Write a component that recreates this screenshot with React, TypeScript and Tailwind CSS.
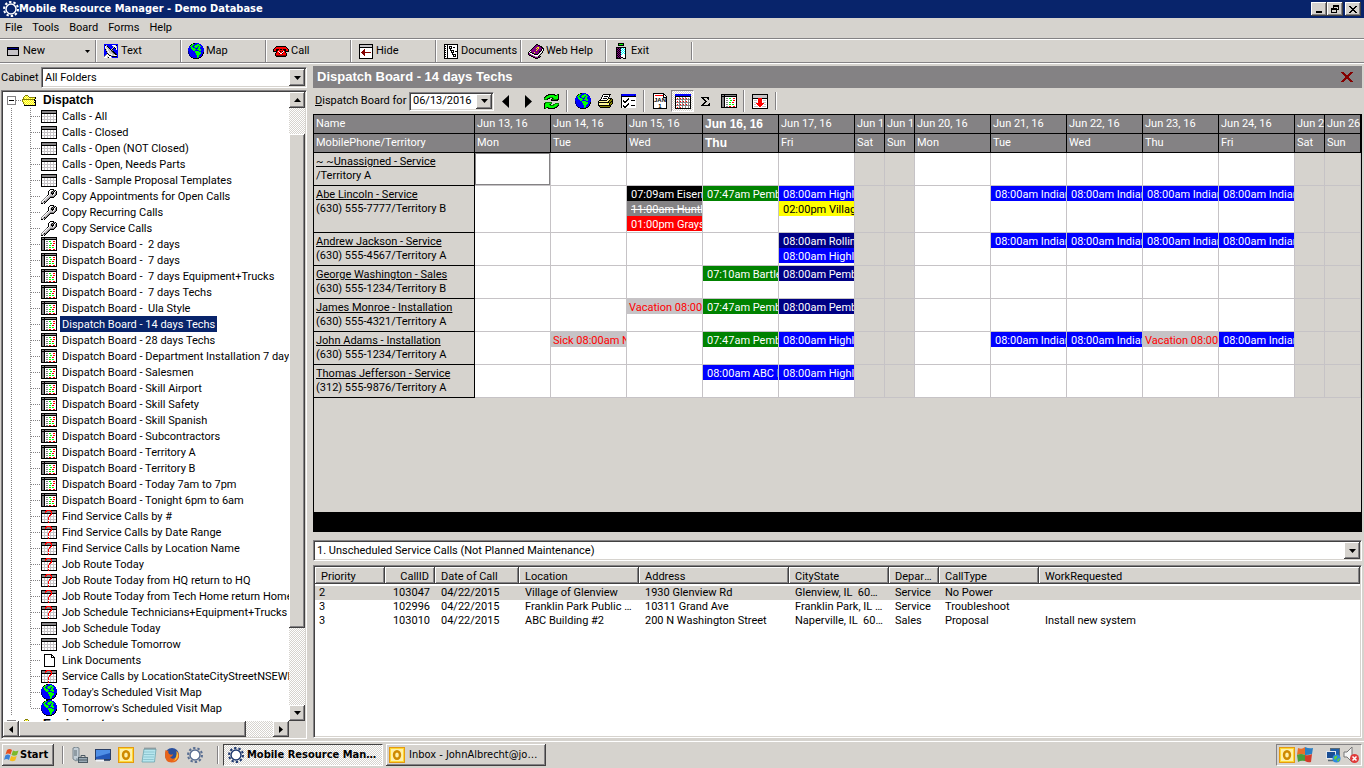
import React from 'react';
import clsx from 'clsx';

const RAISED = 'bg-[#d6d3ce] shadow-[inset_-1px_-1px_#424142,inset_1px_1px_#ffffff,inset_-2px_-2px_#848284]';
const SUNKEN =
  'border border-[#848284] border-r-white border-b-white p-px shadow-[inset_1px_1px_#424142,inset_-1px_-1px_#d6d3ce]';
const CHECKER = 'bg-[repeating-conic-gradient(#ffffff_0_25%,#d6d3ce_0_50%)] bg-[length:2px_2px]';
const DOTS_V = 'w-px bg-[repeating-linear-gradient(to_bottom,#848284_0_1px,transparent_1px_2px)]';
const DOTS_H = 'h-px bg-[repeating-linear-gradient(to_right,#848284_0_1px,transparent_1px_2px)]';
const UI_FONT = "font-['DejaVu_Sans_Condensed','DejaVu_Sans',sans-serif]";
const BOLD_FONT = "font-['Liberation_Sans',Arial,sans-serif] font-bold";

/* ---------- icons ---------- */

const PALETTE: Record<string, string> = {
  k: '#000000',
  w: '#ffffff',
  g: '#848284',
  l: '#c6c3c6',
  b: '#0000ff',
  n: '#000084',
  G: '#00ff00',
  d: '#008200',
  r: '#ff0000',
  m: '#840000',
  y: '#ffff00',
  Y: '#fff79c',
  p: '#840084',
  c: '#00ffff',
  o: '#848200',
};

// One character per pixel, anything outside the palette stays transparent
function Pixels({ rows }: { rows: string[] }) {
  const w = Math.max(...rows.map((row) => row.length));
  return (
    <svg width={w} height={rows.length} viewBox={`0 0 ${w} ${rows.length}`} shapeRendering="crispEdges" className="shrink-0" aria-hidden="true">
      {rows.map((row, y) =>
        row.split('').map((ch, x) =>
          PALETTE[ch] ? <rect key={`${x}-${y}`} x={x} y={y} width="1" height="1" fill={PALETTE[ch]} /> : null
        )
      )}
    </svg>
  );
}

const GLOBE = [
  '.....kkbbbb.....',
  '...kGGbbbGGbb...',
  '..kGGbbGGGGGbb..',
  '.bGGbbGGGGbGGbb.',
  '.bbGGbbGGbGGbbb.',
  'bbbGGGGbbbGGbbbb',
  'bbbbGGGGbGGGGbbb',
  'bbbbbGGbbbbGGbbb',
  'nbbbbbbGGGGbbbbb',
  'nbbbbbbGGGGGGbbk',
  'nbbbbbbbGGGGGbbk',
  '.nbbbbbbGGGGbbk.',
  '.nbbbbbbbGGbbbk.',
  '..nbbbbbbGGbbk..',
  '...knbbbbGbkk...',
  '.....kkkkkk.....',
];

const FOLDER = [
  '...ooo.........',
  '..oYyYo........',
  '.oYyYyYooooook.',
  '.oyYyYyYyYyYyk.',
  'ooooooooooook..',
  'oYyYyYyYyYyYkk.',
  'oyYyYyYyYyYyYk.',
  '.oyYyYyYyYyYkk.',
  '.oYyYyYyYyYyYk.',
  '..oYyYyYyYyYyk.',
  '..kkkkkkkkkkkk.',
];

const WRENCH = [
  '.........kkkk...',
  '........kwwwkgk.',
  '.......kwwgkgkwk',
  '.......kwlkgkwgk',
  '.......kwlkkkwgk',
  '.......kwllkwlgk',
  '......kwlllllgk.',
  '.....gwllggggk..',
  '....gwllgkkkk...',
  '...gwllgk.......',
  '..gwllgk........',
  '.gwllgk.........',
  'gwlkgk..........',
  'glggk...........',
  'kk.k............',
];

const PAGE = [
  'kkkkkkkk...',
  'kwwwwwwkk..',
  'kwwwwwwkwk.',
  'kwwwwwwkkkk',
  'kwwwwwwwwwk',
  'kwwwwwwwwwk',
  'kwwwwwwwwwk',
  'kwwwwwwwwwk',
  'kwwwwwwwwwk',
  'kwwwwwwwwwk',
  'kwwwwwwwwwk',
  'kwwwwwwwwwk',
  'kkkkkkkkkkk',
];

const NEW_FORM = [
  'kkkkkkkkkkkk',
  'knnnnnnnnnnk',
  'kkkkkkkkkkkk',
  'kllllllllllk',
  'kllllllllllk',
  'kllllllllllk',
  'kllllllllllk',
  'kllllllllllk',
  'kkkkkkkkkkkk',
];

const DISH = [
  'bbbbbbbbbbbbbb',
  'bklbbbbbwwwlkb',
  'bwlkbbbbblwwlb',
  'bwllkbbbblkwlb',
  'blwllkbblkbkwb',
  'bklwllklkbbbwb',
  'bblwlllkgbbbbb',
  'bbklwllgkkbbbb',
  'bbblwlllgkkbbb',
  'bbbklwlllgkkbb',
  'bbgwklwwlllkkb',
  'bgwwwkklllwwlb',
  'gwwlwwwbkkkkkb',
  'wwwlkwwlbbbbbb',
];

const PHONE = [
  '...kkkkkkkkkk...',
  '..krrrrrrrrrrk..',
  '.krrrrrrrrrrrrk.',
  'krrkkkrkkrkkkrrk',
  'krrkkrrrrrrkkrrk',
  'kkkkrwrkrkwrkkkk',
  '...krrwrrwrrk...',
  '..krrrkwwkrrrk..',
  '..krrrrrrrrrrk..',
  '..kmmmmmmmmmmk..',
  '...kkkkkkkkkk...',
];

const HIDE = [
  'kkkkkkkkkkkkkk',
  'kllllllllllllk',
  'kllllllllllllk',
  'kkkkkkkkkkkkkk',
  'kwwwwwwwwwwwwk',
  'kwwwwmwwwwwwwk',
  'kwwwmmwwwwwwwk',
  'kwwmmmwwwwwwwk',
  'kwmmmmmmmmmmwk',
  'kwwmmmwwwwwwwk',
  'kwwwmmwwwwwwwk',
  'kwwwwmwwwwwwwk',
  'kwwwwwwwwwwwwk',
  'kwwwwwwwwwwwwk',
  'kkkkkkkkkkkkkk',
];

const DOCS = [
  'kkkkkkkkkkkkkk',
  'kwwkwwwwwwwwwk',
  'kkwkwkkkwwwwwk',
  'kwwkwkwkwkkwwk',
  'kkwkwkkkwwwwwk',
  'kwwkwwkwwwwwwk',
  'kkwkwwkkkkwwwk',
  'kwwkwwwkwkwkkk',
  'kkwkwwwkkkwwwk',
  'kwwkwwwwkwwwwk',
  'kkwkwwwwkkkkwk',
  'kwwkwwwwwkwkwk',
  'kkwkwwwwwkkkwk',
  'kwwkwwwwwwwwwk',
  'kkkkkkkkkkkkkk',
];

const BOOK = [
  '........kk......',
  '.......kppkk....',
  '......kpppppkk..',
  '.....kpppyyppkk.',
  '....kpppypypppkk',
  '...kpppppypppkwk',
  '..kpppppyppppkwk',
  '.kwppppppppkkwk.',
  'kwkkppyppppkwlk.',
  'kpwwkkppppkwlk..',
  'kpplwwkkkkwlk...',
  '.kkpplwwwwlk....',
  '...kkpplllkpk...',
  '.....kkpppkk....',
  '.......kkk......',
];

const EXIT = [
  '..kkkkkk..',
  '..kGGGGk..',
  '..kkkkkk..',
  '..........',
  'kkkkkkkkkk',
  'kpkpkcwcwk',
  'kkpkpwcwck',
  'kpkpkcwcwk',
  'kkpkpwcwck',
  'kpkpkcwcwk',
  'kkpkpwcwck',
  'kpkpkcwwwk',
  'kkpkpwwwwk',
  'kpkpkwwwwk',
  'kkpkpkkwwk',
  'kkkkk..kkk',
];

const REFRESH = [
  '....kkkkkkk..dk.',
  '..kkdGGGGGdkdGk.',
  '.kdGGGGGGGGGGGk.',
  'kdGGGddddGGGGGk.',
  'dGGdkk..kdGGGGk.',
  'dddk...kdddddkk.',
  '.......kkkkkkk..',
  '................',
  '.ddddddd........',
  'kdGGGGGd...dddd.',
  'kGGGGdk..ddGGGd.',
  'kGGGGGddddGGGdk.',
  'kGGGGGGGGGGGdk..',
  'kGdkdGGGGGdkk...',
  'kd..kkkkkkk.....',
];

const PRINTER = [
  '.....kkkkkkkk...',
  '....kwwwwwwk....',
  '....kwkkkkwk....',
  '...kwwwwwwk.....',
  '...kwkkkkwkkkk..',
  '..kwwwwwwkYYkok.',
  '.kkkkkkkkYYkook.',
  'kYYYYYYYYYkookk.',
  'kkkkkkkkkkkokok.',
  'kYYYYYYYYyYkook.',
  'kYYYYYYYYYYkok..',
  'kkkkkkkkkkkkk...',
  '.kooooooooook...',
  '..kkkkkkkkkk....',
];

const CHECKS = [
  'nbbbbbbbbbbbbbb',
  'nbbbbbbbbbbbbnb',
  'kkkkkkkkkkkkkkk',
  'kwwwwwwwwwwwwww',
  'kwwwwwwkwwwwwww',
  'kwwwwwkkwwwwwww',
  'kwkwwkkwwwkkkkw',
  'kwkkkkwwwwwwwww',
  'kwwkkwwwwwwwwww',
  'kwwwwwwkwwwwwww',
  'kwwwwwkkwwwwwww',
  'kwkwwkkwwwkkkkw',
  'kwkkkkwwwwwwwww',
  'kwwkkwwwwwwwwww',
];

const CALENDAR = [
  'bbbbbbbbbbbbbbbb',
  'bbbbbbbbbbbbbbbb',
  'kkkkkkkkkkkkkkkk',
  'kwwwgwwgwwgwwwwk',
  'kwrwgrwgrwgrwgwk',
  'kggggggggggggggk',
  'kwwwgwwgwwgwwgwk',
  'kwrwgrwgrwgrwgwk',
  'kggggggggggggggk',
  'kwwwgwwgwwgwwgwk',
  'kwrwgrwgrwgrwgwk',
  'kggggggggggggggk',
  'kwwwgwwgwwgwwgwk',
  'kwrwgrwgwwgwwgwk',
  'kkkkkkkkkkkkkkkk',
];

const BOARD = [
  'kkkkkkkkkkkkkkkk',
  'kggkgggggggggggk',
  'kkkkkkkkkkkkkkkk',
  'kggkwwwwwwwwwwwk',
  'kggkwggwGGwwrrwk',
  'kggkwwwwwwwwwwwk',
  'kggkwggwwGGwrrwk',
  'kggkwwwwwwwwwwwk',
  'kggkwggwGGwrrwwk',
  'kggkwwwwwwwwwwwk',
  'kggkwggwGGwGGwwk',
  'kggkwwwwwwwwwwwk',
  'kggkwggwrrwwrrwk',
  'kkkkkkkkkkkkkkkk',
];

const SPLIT_DOWN = [
  'kkkkkkkkkkkkkkkk',
  'kllllllllllllllk',
  'kllllllllllllllk',
  'kllllllllllllllk',
  'kkkkkkrrrrkkkkkk',
  'kwwwwwrrrrwwwwwk',
  'kwlllwrrrrwlllwk',
  'kwwwwwrrrrwwwwwk',
  'kwlllwrrrrwlllwk',
  'kwwwrrrrrrrrwwwk',
  'kwllwrrrrrrwllwk',
  'kwwwwwrrrrwwwwwk',
  'kwllllwrrwllllwk',
  'kwwwwwwwwwwwwwwk',
  'kkkkkkkkkkkkkkkk',
];

const CLOSE_X = [
  'mmm......mmm',
  '.mmm....mmm.',
  '..mmm..mmm..',
  '...mmmmmm...',
  '....mmmm....',
  '....mmmm....',
  '...mmmmmm...',
  '..mmm..mmm..',
  '.mmm....mmm.',
  'mmm......mmm',
];

const MINIMIZE = ['.......', '.......', '.......', '.......', '.......', 'kkkkkk.', 'kkkkkk.'];
const RESTORE = ['..kkkkkk', '..kkkkkk', '..k....k', 'kkkkkk.k', 'kkkkkkkk', 'k....k..', 'k....k..', 'kkkkkk..'];
const SHUT = ['kk....kk', '.kk..kk.', '..kkkk..', '...kk...', '..kkkk..', '.kk..kk.', 'kk....kk'];

const SIGMA = [
  'kkkkkkkk.',
  '.kk...kk.',
  '..kk...k.',
  '...kk....',
  '....kk...',
  '...kk....',
  '..kk....k',
  '.kk....kk',
  'kkkkkkkkk',
];

const GRID = [
  'kkkkkkkkkkkkkkkk',
  'kggggggggggggggk',
  'kggggggggggggggk',
  'kkkkkkkkkkkkkkkk',
  'kwwlwwlwwlwwlwwk',
  'kwwlwwlwwlwwlwwk',
  'kllllllllllllllk',
  'kwwlwwlwwlwwlwwk',
  'kwwlwwlwwlwwlwwk',
  'kllllllllllllllk',
  'kwwlwwlwwlwwlwwk',
  'kwwlwwlwwlwwlwwk',
  'kkkkkkkkkkkkkkkk',
];

const SEARCH_GRID = [
  'kkkkkrrrrrkkkkkk',
  'kgggrrgggrrggggk',
  'kgggrgggggrggggk',
  'kkkkkkkkkkrkkkkk',
  'kwwlwwlwwrrwlwwk',
  'kwwlwwlwrrwwlwwk',
  'klllllllrllllllk',
  'kwwlwwlrwlwwlwwk',
  'kwwlwwlrwlwwlwwk',
  'kllllllrlllllllk',
  'kwwlwwlwwlwwlwwk',
  'kwwlwwlrwlwwlwwk',
  'kkkkkkkrkkkkkkkk',
];

function JanIcon() {
  return (
    <svg width="14" height="16" viewBox="0 0 14 16" shapeRendering="crispEdges" className="shrink-0" aria-hidden="true">
      <path d="M0.5 0.5h10l3 3v12h-13z" fill="#fff" stroke="#000" />
      <path d="M2 2.5h8" stroke="#ff0000" />
      <path d="M10 0v4h4" fill="none" stroke="#000" />
      <text x="7" y="9" fontSize="6" fontWeight="bold" textAnchor="middle" fontFamily="Liberation Sans">JAN</text>
      <text x="7" y="15" fontSize="6" fontWeight="bold" textAnchor="middle" fontFamily="Liberation Sans">1</text>
    </svg>
  );
}

function GearIcon({ color, fill = 'none' }: { color: string; fill?: string }) {
  return (
    <svg width="16" height="16" viewBox="0 0 16 16" className="shrink-0" aria-hidden="true">
      <circle cx="8" cy="8" r="7" fill="none" stroke={color} strokeWidth="2" strokeDasharray="2.4 2" />
      <circle cx="8" cy="8" r="5" fill={fill} stroke={color} strokeWidth="1.5" />
    </svg>
  );
}

function WindowsFlag() {
  return (
    <svg width="16" height="16" viewBox="0 0 16 16" className="shrink-0" aria-hidden="true">
      <path d="M3 3q2.5-2 5 0l-1.5 4.5q-2.5-2-5 0z" fill="#e8501f" />
      <path d="M9 3.5q2.5 1.5 5.5 0L13 8q-3 1.5-5.5 0z" fill="#7cb92c" />
      <path d="M1.3 8.5q2.5-2 5 0L5 13q-2.5-2-5 0z" fill="#3b82d8" />
      <path d="M7.2 9q2.5 1.5 5.5 0L11.2 13.5q-3 1.5-5.5 0z" fill="#f6bd1d" />
    </svg>
  );
}

function OutlookIcon() {
  return (
    <svg width="16" height="16" viewBox="0 0 16 16" className="shrink-0" aria-hidden="true">
      <rect x="0.5" y="0.5" width="15" height="15" fill="#fdd835" stroke="#e59a10" />
      <rect x="2" y="2" width="12" height="12" fill="#fff0a8" />
      <ellipse cx="8" cy="8" rx="3" ry="3.8" fill="none" stroke="#cf8a00" strokeWidth="2.4" />
    </svg>
  );
}

function ServerIcon() {
  return (
    <svg width="16" height="16" viewBox="0 0 16 16" className="shrink-0" aria-hidden="true">
      <path d="M1 1l3-1 3 1v11l-3 2-3-2z" fill="#c3ced6" stroke="#66757f" strokeWidth="0.8" />
      <path d="M2 4h3M2 6h3M2 8h3" stroke="#5c6a73" />
      <path d="M4 12l4 2" stroke="#8fa0ac" strokeWidth="2" />
      <rect x="6.5" y="10.5" width="9" height="5" fill="#9aaab5" stroke="#4c5a64" />
      <path d="M9 10V8.5h4V10M7 13h8" fill="none" stroke="#4c5a64" />
    </svg>
  );
}

function DesktopIcon() {
  return (
    <svg width="16" height="16" viewBox="0 0 16 16" className="shrink-0" aria-hidden="true">
      <rect x="0.5" y="2.5" width="15" height="10" fill="#2358b8" stroke="#2a3f66" />
      <path d="M1 3h14v3L1 10z" fill="#4f8fe6" />
      <path d="M1 13.5h8" stroke="#f0f4fa" strokeWidth="2" />
      <path d="M9 13.5h6" stroke="#4a5a78" strokeWidth="1" />
    </svg>
  );
}

function NotepadIcon() {
  return (
    <svg width="16" height="16" viewBox="0 0 16 16" className="shrink-0" aria-hidden="true">
      <path d="M3 2h12l-1.5 13H1z" fill="#b7e6ee" stroke="#6aa5b0" strokeWidth="0.8" />
      <path d="M3 5h10.5M2.8 7.5h10.5M2.5 10h10.5M2.2 12.5h10.5" stroke="#7cb7c4" strokeWidth="0.7" />
      <path d="M3.5 1.5h11" stroke="#6b7a80" strokeDasharray="1 1" strokeWidth="2" />
    </svg>
  );
}

function FirefoxIcon() {
  return (
    <svg width="16" height="16" viewBox="0 0 16 16" className="shrink-0" aria-hidden="true">
      <circle cx="8" cy="8" r="7" fill="#2a4f9c" />
      <path d="M1.5 3q1.5 1 3 .5Q3.5 6 6 7.5q2 .5 3-.5-.5 3-3 3 2 3 5 1 3-2.5 1.5-7Q15.5 6 15 10q-1.5 5.5-7.5 5.5Q1 15 1 8.5 1 5 1.5 3z" fill="#e8641b" />
      <path d="M12.5 4q2.5 3 1 7-1.5 3-5 3.5 5-3 4-10.5z" fill="#ffc233" />
    </svg>
  );
}

function QuadIcon() {
  return (
    <svg width="16" height="16" viewBox="0 0 16 16" className="shrink-0" aria-hidden="true">
      <path d="M1 1q4 2 7-1v8q-4-2-8 0z" fill="#e8702a" />
      <path d="M8 0q4 2 8 1l-1 6q-3 1-7 1z" fill="#2b7fc4" />
      <path d="M0 8q4-2 8 0v6q-4-1-7 1z" fill="#4a9c3a" />
      <path d="M8 8q4 1 7-1l-1 8q-3 1-6-1z" fill="#d43a2a" />
    </svg>
  );
}

function NetworkIcon() {
  return (
    <svg width="16" height="16" viewBox="0 0 16 16" className="shrink-0" aria-hidden="true">
      <rect x="5.5" y="1.5" width="9" height="7" fill="#1f5fa8" stroke="#5c6a73" />
      <rect x="1.5" y="4.5" width="9" height="7" fill="#1b4f94" stroke="#e4e9ee" />
      <path d="M3 13.5h6" stroke="#5c6a73" strokeWidth="1.5" />
      <circle cx="11.5" cy="11.5" r="4" fill="#2d8be0" />
      <path d="M9 10q2-2 3-1t-1 3-2-2zM12 13l2-2 1 1-2 3z" fill="#5fd03a" />
    </svg>
  );
}

function MutedIcon() {
  return (
    <svg width="16" height="16" viewBox="0 0 16 16" className="shrink-0" aria-hidden="true">
      <path d="M1 5h3l5-5v15l-5-5H1z" fill="#f4f4f4" stroke="#777" />
      <circle cx="11.5" cy="11.5" r="4.5" fill="#e03a3a" />
      <path d="M9.5 9.5l4 4M13.5 9.5l-4 4" stroke="#fff" strokeWidth="1.5" />
    </svg>
  );
}

function Arrow({ dir, size = 4 }: { dir: 'up' | 'down' | 'left' | 'right'; size?: number }) {
  const long = size * 2 - 1;
  const horizontal = dir === 'left' || dir === 'right';
  const w = horizontal ? size : long;
  const h = horizontal ? long : size;
  const points = {
    up: `0,${h} ${w},${h} ${w / 2},0`,
    down: `0,0 ${w},0 ${w / 2},${h}`,
    left: `${w},0 ${w},${h} 0,${h / 2}`,
    right: `0,0 0,${h} ${w},${h / 2}`,
  }[dir];
  return (
    <svg width={w} height={h} viewBox={`0 0 ${w} ${h}`} className="shrink-0" aria-hidden="true">
      <polygon points={points} fill="#000" />
    </svg>
  );
}

/* ---------- small controls ---------- */

function Combo({ label, value, className }: { label: string; value: string; className?: string }) {
  return (
    <div className={clsx('flex bg-white', SUNKEN, className)}>
      <select aria-label={label} className="min-w-0 flex-1 appearance-none bg-white pl-[2px] outline-none">
        <option>{value}</option>
      </select>
      <span className={clsx('flex w-4 shrink-0 items-center justify-center', RAISED)}>
        <Arrow dir="down" />
      </span>
    </div>
  );
}

function ScrollButton({ dir }: { dir: 'up' | 'down' | 'left' | 'right' }) {
  return (
    <button type="button" aria-label={`Scroll ${dir}`} className={clsx('flex size-4 shrink-0 items-center justify-center', RAISED)}>
      <Arrow dir={dir} />
    </button>
  );
}

function Divider({ className }: { className?: string }) {
  return <span className={clsx('w-[2px] border-l border-r border-l-[#848284] border-r-white', className)} />;
}

/* ---------- title, menu and toolbar ---------- */

function TitleBar() {
  const controls = [
    { label: 'Minimize', rows: MINIMIZE, gap: '' },
    { label: 'Restore', rows: RESTORE, gap: '' },
    { label: 'Close', rows: SHUT, gap: 'ml-[2px]' },
  ];
  return (
    <header className={clsx('flex h-[18px] shrink-0 items-center bg-[#08246b] pl-[3px] pr-[3px] text-white', UI_FONT)}>
      <GearIcon color="#ffffff" />
      <h1 className="flex-1 text-[11px] font-bold">Mobile Resource Manager - Demo Database</h1>
      {controls.map((c) => (
        <button key={c.label} type="button" aria-label={c.label} className={clsx('flex h-[14px] w-4 items-center justify-center', RAISED, c.gap)}>
          <Pixels rows={c.rows} />
        </button>
      ))}
    </header>
  );
}

function MenuBar() {
  return (
    <nav className="flex h-[21px] shrink-0 items-center border-b border-[#848284]">
      {['File', 'Tools', 'Board', 'Forms', 'Help'].map((item) => (
        <button key={item} type="button" className="px-[5px]">
          {item}
        </button>
      ))}
    </nav>
  );
}

const TOOLS = [
  { label: 'Text', rows: DISH },
  { label: 'Map', rows: GLOBE },
  { label: 'Call', rows: PHONE },
  { label: 'Hide', rows: HIDE },
  { label: 'Documents', rows: DOCS },
  { label: 'Web Help', rows: BOOK },
  { label: 'Exit', rows: EXIT },
];

function ToolBar() {
  return (
    <div className="flex h-6 shrink-0 items-center border-t border-b border-t-white border-b-[#848284] leading-4">
      <button type="button" className="flex h-full w-24 items-center border-r border-[#848284] pl-[7px] pr-[5px]">
        <Pixels rows={NEW_FORM} />
        <span className="flex-1 pl-1 text-left">New</span>
        <Arrow dir="down" size={3} />
      </button>
      {TOOLS.map(({ label, rows }, i) => (
        <button
          key={label}
          type="button"
          className={clsx(
            'flex h-full w-[85px] items-center gap-[2px] border-l border-l-white pl-[6px]',
            i < TOOLS.length - 1 && 'border-r border-r-[#848284]'
          )}
        >
          <span className="flex w-4 shrink-0 justify-center">
            <Pixels rows={rows} />
          </span>
          {label}
        </button>
      ))}
      <Divider className="h-[18px]" />
    </div>
  );
}

/* ---------- folder tree ---------- */

type TreeIcon = 'grid' | 'wrench' | 'board' | 'search' | 'page' | 'globe';

const TREE: [TreeIcon, string][] = [
  ['grid', 'Calls - All'],
  ['grid', 'Calls - Closed'],
  ['grid', 'Calls - Open (NOT Closed)'],
  ['grid', 'Calls - Open, Needs Parts'],
  ['grid', 'Calls - Sample Proposal Templates'],
  ['wrench', 'Copy Appointments for Open Calls'],
  ['wrench', 'Copy Recurring Calls'],
  ['wrench', 'Copy Service Calls'],
  ['board', 'Dispatch Board -  2 days'],
  ['board', 'Dispatch Board -  7 days'],
  ['board', 'Dispatch Board -  7 days Equipment+Trucks'],
  ['board', 'Dispatch Board -  7 days Techs'],
  ['board', 'Dispatch Board -  Ula Style'],
  ['board', 'Dispatch Board - 14 days Techs'],
  ['board', 'Dispatch Board - 28 days Techs'],
  ['board', 'Dispatch Board - Department Installation 7 days'],
  ['board', 'Dispatch Board - Salesmen'],
  ['board', 'Dispatch Board - Skill Airport'],
  ['board', 'Dispatch Board - Skill Safety'],
  ['board', 'Dispatch Board - Skill Spanish'],
  ['board', 'Dispatch Board - Subcontractors'],
  ['board', 'Dispatch Board - Territory A'],
  ['board', 'Dispatch Board - Territory B'],
  ['board', 'Dispatch Board - Today 7am to 7pm'],
  ['board', 'Dispatch Board - Tonight 6pm to 6am'],
  ['search', 'Find Service Calls by #'],
  ['search', 'Find Service Calls by Date Range'],
  ['search', 'Find Service Calls by Location Name'],
  ['search', 'Job Route Today'],
  ['search', 'Job Route Today from HQ return to HQ'],
  ['search', 'Job Route Today from Tech Home return Home'],
  ['search', 'Job Schedule Technicians+Equipment+Trucks'],
  ['grid', 'Job Schedule Today'],
  ['grid', 'Job Schedule Tomorrow'],
  ['page', 'Link Documents'],
  ['search', 'Service Calls by LocationStateCityStreetNSEWName'],
  ['globe', "Today's Scheduled Visit Map"],
  ['globe', "Tomorrow's Scheduled Visit Map"],
];

const TREE_ICONS: Record<TreeIcon, string[]> = {
  grid: GRID,
  search: SEARCH_GRID,
  board: BOARD,
  wrench: WRENCH,
  page: PAGE,
  globe: GLOBE,
};

function FolderRow({ label, open }: { label: string; open: boolean }) {
  return (
    <div className="flex h-4 items-center pl-1">
      <span className="flex size-[9px] shrink-0 items-center justify-center border border-[#848284] bg-white">
        {open ? <span className="h-px w-[5px] bg-black" /> : <span className="text-[9px] leading-none">+</span>}
      </span>
      <span className={clsx('w-[6px] shrink-0', DOTS_H)} />
      <Pixels rows={FOLDER} />
      <button type="button" className={clsx('pl-[6px] text-[12px]', BOLD_FONT)}>
        {label}
      </button>
    </div>
  );
}

function FolderTree() {
  const [selected, setSelected] = React.useState('Dispatch Board - 14 days Techs');

  return (
    <div className={clsx('flex min-h-0 flex-1 flex-col bg-white', SUNKEN)}>
      <div className="flex min-h-0 flex-1">
        <div className="min-w-0 flex-1 overflow-hidden">
          <FolderRow label="Dispatch" open />
          <ul>
            {TREE.map(([icon, label], i) => (
              <li key={label} className="flex h-4 items-center">
                <span className={clsx('ml-2 shrink-0 self-stretch', DOTS_V)} />
                <span
                  className={clsx('ml-[18px] shrink-0', DOTS_V, i === TREE.length - 1 ? 'h-2 self-start' : 'self-stretch')}
                />
                <span className={clsx('w-[10px] shrink-0', DOTS_H)} />
                <span className="flex w-4 shrink-0 justify-center">
                  <Pixels rows={TREE_ICONS[icon]} />
                </span>
                <button
                  type="button"
                  onClick={() => setSelected(label)}
                  className={clsx(
                    'ml-[3px] h-4 shrink-0 px-[2px] pt-px leading-4 whitespace-pre',
                    selected === label && 'bg-[#08246b] text-white'
                  )}
                >
                  {label}
                </button>
              </li>
            ))}
          </ul>
          <FolderRow label="Equipment" open={false} />
        </div>
        <div className={clsx('flex w-4 flex-col', CHECKER)}>
          <ScrollButton dir="up" />
          <div className="flex-[26]" />
          <div className={clsx('flex-[494]', RAISED)} />
          <div className="flex-[77]" />
          <ScrollButton dir="down" />
        </div>
      </div>
      <div className="flex bg-[#d6d3ce] pr-4">
        <div className={clsx('flex flex-1', CHECKER)}>
          <ScrollButton dir="left" />
          <div className={clsx('flex-[227]', RAISED)} />
          <div className="flex-[27]" />
          <ScrollButton dir="right" />
        </div>
      </div>
    </div>
  );
}

/* ---------- dispatch board ---------- */

const DAYS = [
  ['Jun 13, 16', 'Mon'],
  ['Jun 14, 16', 'Tue'],
  ['Jun 15, 16', 'Wed'],
  ['Jun 16, 16', 'Thu'],
  ['Jun 17, 16', 'Fri'],
  ['Jun 18, 16', 'Sat'],
  ['Jun 19, 16', 'Sun'],
  ['Jun 20, 16', 'Mon'],
  ['Jun 21, 16', 'Tue'],
  ['Jun 22, 16', 'Wed'],
  ['Jun 23, 16', 'Thu'],
  ['Jun 24, 16', 'Fri'],
  ['Jun 25, 16', 'Sat'],
  ['Jun 26, 16', 'Sun'],
];
const TODAY = 3;

const TONES = {
  black: 'bg-black pl-1 text-white',
  gray: 'bg-[#848284] pl-1 text-white line-through',
  red: 'bg-[#ff0000] pl-1 text-white',
  green: 'bg-[#008200] pl-1 text-white',
  blue: 'bg-[#0000ff] pl-1 text-white',
  navy: 'bg-[#000084] pl-1 text-white',
  yellow: 'bg-[#ffff00] pl-1 text-black',
  off: 'bg-[#c6c3c6] pl-[2px] text-[#ff0000]',
};

type Visit = [keyof typeof TONES, string];

const INDIAN: Visit[] = [['blue', '08:00am Indian']];
const HIGHLAND: Visit[] = [['blue', '08:00am Highland']];

const STAFF: { name: string; phone: string; visits: Record<number, Visit[]> }[] = [
  { name: '~ ~Unassigned - Service', phone: '/Territory A', visits: {} },
  {
    name: 'Abe Lincoln - Service',
    phone: '(630) 555-7777/Territory B',
    visits: {
      2: [
        ['black', '07:09am Eisen'],
        ['gray', '11:00am Huntley'],
        ['red', '01:00pm Grayslake'],
      ],
      3: [['green', '07:47am Pembroke']],
      4: [...HIGHLAND, ['yellow', '02:00pm Village']],
      8: INDIAN,
      9: INDIAN,
      10: INDIAN,
      11: INDIAN,
    },
  },
  {
    name: 'Andrew Jackson - Service',
    phone: '(630) 555-4567/Territory A',
    visits: {
      4: [['navy', '08:00am Rolling'], ...HIGHLAND],
      8: INDIAN,
      9: INDIAN,
      10: INDIAN,
      11: INDIAN,
    },
  },
  {
    name: 'George Washington - Sales',
    phone: '(630) 555-1234/Territory B',
    visits: { 3: [['green', '07:10am Bartlett']], 4: [['navy', '08:00am Pembroke']] },
  },
  {
    name: 'James Monroe - Installation',
    phone: '(630) 555-4321/Territory A',
    visits: {
      2: [['off', 'Vacation 08:00']],
      3: [['green', '07:47am Pembroke']],
      4: [['navy', '08:00am Pembroke']],
    },
  },
  {
    name: 'John Adams - Installation',
    phone: '(630) 555-1234/Territory A',
    visits: {
      1: [['off', 'Sick 08:00am N']],
      3: [['green', '07:47am Pembroke']],
      4: HIGHLAND,
      8: INDIAN,
      9: INDIAN,
      10: [['off', 'Vacation 08:00']],
      11: INDIAN,
    },
  },
  {
    name: 'Thomas Jefferson - Service',
    phone: '(312) 555-9876/Territory A',
    visits: { 3: [['blue', '08:00am ABC Building']], 4: HIGHLAND },
  },
];

const isWeekend = (day: string) => day === 'Sat' || day === 'Sun';

function IconButton({ label, pressed, children }: { label: string; pressed?: boolean; children: React.ReactNode }) {
  return (
    <button
      type="button"
      aria-label={label}
      className={clsx(
        'flex h-[22px] w-[23px] items-center justify-center',
        pressed && ['border border-[#848284] border-r-white border-b-white', CHECKER]
      )}
    >
      {children}
    </button>
  );
}

function BoardToolbar() {
  return (
    <div className="flex h-[26px] shrink-0 items-center pl-[2px]">
      <span className="w-[94px]">
        <u>D</u>ispatch Board for
      </span>
      <Combo label="Dispatch Board for" value="06/13/2016" className="h-[19px] w-[85px]" />
      <IconButton label="Previous day"><Arrow dir="left" size={7} /></IconButton>
      <IconButton label="Next day"><Arrow dir="right" size={7} /></IconButton>
      <IconButton label="Refresh"><Pixels rows={REFRESH} /></IconButton>
      <Divider className="mx-[3px] h-[22px]" />
      <IconButton label="Map"><Pixels rows={GLOBE} /></IconButton>
      <IconButton label="Print"><Pixels rows={PRINTER} /></IconButton>
      <IconButton label="Options"><Pixels rows={CHECKS} /></IconButton>
      <Divider className="mx-[3px] h-[22px]" />
      <IconButton label="Day"><JanIcon /></IconButton>
      <IconButton label="Calendar" pressed><Pixels rows={CALENDAR} /></IconButton>
      <IconButton label="Totals"><Pixels rows={SIGMA} /></IconButton>
      <IconButton label="Board"><Pixels rows={BOARD} /></IconButton>
      <Divider className="mx-[3px] h-[22px]" />
      <IconButton label="Collapse"><Pixels rows={SPLIT_DOWN} /></IconButton>
      <Divider className="ml-1 h-[18px]" />
    </div>
  );
}

function BoardGrid() {
  return (
    <div className="min-h-0 flex-[397] overflow-hidden border-x border-t border-b-[20px] border-black">
      <table className="w-full table-fixed border-separate border-spacing-0 whitespace-nowrap">
        <colgroup>
          <col className="w-[161px]" />
          {DAYS.map(([date, day], i) => (
            <col key={date} className={i === DAYS.length - 1 ? '' : isWeekend(day) ? 'w-[30px]' : 'w-[76px]'} />
          ))}
        </colgroup>
        <thead className="bg-[#848284] text-left text-white">
          {['Name', 'MobilePhone/Territory'].map((title, line) => (
            <tr key={title} className="h-[19px]">
              <th className="border-r border-b border-black p-0 pb-px pl-[2px] font-normal">{title}</th>
              {DAYS.map((d, i) => (
                <th
                  key={d[0]}
                  className={clsx(
                    'overflow-hidden border-r border-b border-black p-0 pb-px pl-[2px]',
                    i === TODAY ? ['text-[12px]', BOLD_FONT] : 'font-normal'
                  )}
                >
                  {d[line]}
                </th>
              ))}
            </tr>
          ))}
        </thead>
        <tbody>
          {STAFF.map((person, row) => (
            <tr key={person.name} className="h-[33px]">
              <th className="border-r border-b border-black p-0 pt-[2px] pl-[2px] text-left align-top leading-[14px] font-normal">
                <a href="#" className="underline">{person.name}</a>
                <div>{person.phone}</div>
              </th>
              {DAYS.map(([date, day], i) => {
                const visits = person.visits[i] ?? [];
                return (
                  <td
                    key={date}
                    className={clsx(
                      'border-r border-b border-[#c6c3c6] p-0 align-top',
                      isWeekend(day) ? 'bg-[#d6d3ce]' : 'bg-white',
                      visits.length > 2 && 'pb-px',
                      row === 0 && i === 0 && 'shadow-[inset_0_0_0_1px_#848284]'
                    )}
                  >
                    {visits.map(([tone, text]) => (
                      <div key={text} className={clsx('h-[15px] overflow-hidden leading-[17px]', TONES[tone])}>
                        {text}
                      </div>
                    ))}
                  </td>
                );
              })}
            </tr>
          ))}
        </tbody>
      </table>
    </div>
  );
}

/* ---------- unscheduled calls ---------- */

const COLUMNS = [
  { title: 'Priority', width: 'w-[70px]' },
  { title: 'CallID', width: 'w-[50px]' },
  { title: 'Date of Call', width: 'w-[84px]' },
  { title: 'Location', width: 'w-[120px]' },
  { title: 'Address', width: 'w-[150px]' },
  { title: 'CityState', width: 'w-[100px]' },
  { title: 'Department', width: 'w-[50px]' },
  { title: 'CallType', width: 'w-[100px]' },
  { title: 'WorkRequested', width: '' },
];

const CALLS = [
  ['2', '103047', '04/22/2015', 'Village of Glenview', '1930 Glenview Rd', 'Glenview, IL  60025', 'Service', 'No Power', ''],
  ['3', '102996', '04/22/2015', 'Franklin Park Public Library', '10311 Grand Ave', 'Franklin Park, IL  60131', 'Service', 'Troubleshoot', ''],
  ['3', '103010', '04/22/2015', 'ABC Building #2', '200 N Washington Street', 'Naperville, IL  60540', 'Sales', 'Proposal', 'Install new system'],
];

function CallList() {
  return (
    <div className={clsx('min-h-0 flex-[169] overflow-hidden bg-white', SUNKEN)}>
      <table className="w-full table-fixed border-separate border-spacing-0">
        <colgroup>
          {COLUMNS.map((c) => (
            <col key={c.title} className={c.width} />
          ))}
        </colgroup>
        <thead>
          <tr>
            {COLUMNS.map((c, i) => (
              <th key={c.title} className="p-0 pb-[2px] font-normal">
                <div className={clsx('h-[17px] truncate px-[6px] leading-[19px]', RAISED, i === 1 ? 'text-right' : 'text-left')}>
                  {c.title}
                </div>
              </th>
            ))}
          </tr>
        </thead>
        <tbody>
          {CALLS.map((call, row) => (
            <tr key={call[1]} className={clsx('h-[14px] leading-[14px]', row === 0 && 'bg-[#d6d3ce]')}>
              {call.map((value, i) => (
                <td
                  key={COLUMNS[i].title}
                  className={clsx(
                    'overflow-hidden p-0 text-ellipsis whitespace-pre',
                    i === 0 ? 'pl-1' : i === 1 ? 'pr-[5px] text-right' : 'px-[6px]'
                  )}
                >
                  {value}
                </td>
              ))}
            </tr>
          ))}
        </tbody>
      </table>
    </div>
  );
}

/* ---------- taskbar ---------- */

function TaskBar() {
  return (
    <footer className={clsx('flex h-[27px] shrink-0 items-center border-t border-white px-[2px]', UI_FONT)}>
      <button type="button" className={clsx('flex h-[22px] w-[52px] items-center pl-[2px] text-[11px] font-bold', RAISED)}>
        <WindowsFlag />
        Start
      </button>
      <Divider className="ml-2 h-[18px]" />
      <div className="flex gap-[7px] pl-2">
        <ServerIcon />
        <DesktopIcon />
        <OutlookIcon />
        <NotepadIcon />
        <FirefoxIcon />
        <GearIcon color="#5a6f92" fill="#ffffff" />
      </div>
      <Divider className="ml-[14px] h-[18px]" />
      <button
        type="button"
        className={clsx(
          'ml-1 flex h-[22px] w-40 items-center gap-[3px] border border-[#424142] border-r-white border-b-white pl-1 text-[11px] font-bold',
          CHECKER
        )}
      >
        <GearIcon color="#203a70" fill="#ffffff" />
        <span className="truncate">Mobile Resource Manager</span>
      </button>
      <button type="button" className={clsx('ml-[3px] flex h-[22px] w-40 items-center gap-1 px-[3px] text-[11px]', RAISED)}>
        <OutlookIcon />
        <span className="truncate">Inbox - JohnAlbrecht@johnalbrecht.com</span>
      </button>
      <div className="ml-auto flex h-[22px] items-center gap-[2px] border border-[#848284] border-r-white border-b-white px-[2px]">
        <OutlookIcon />
        <QuadIcon />
        <span className="w-2" />
        <NetworkIcon />
        <MutedIcon />
      </div>
    </footer>
  );
}

export default function App() {
  return (
    <div className="flex h-screen flex-col overflow-hidden bg-[#d6d3ce] font-['Roboto','Liberation_Sans',sans-serif] text-[11px] leading-[14px] text-black">
      <TitleBar />
      <MenuBar />
      <ToolBar />
      <main className="flex min-h-0 flex-1 border-t border-white">
        <aside className="flex w-[307px] shrink-0 flex-col gap-[2px] pt-[3px] pb-[2px] pl-px">
          <div className="flex items-center">
            <span className="w-10">Cabinet</span>
            <Combo label="Cabinet" value="All Folders" className="h-[21px] flex-1" />
          </div>
          <FolderTree />
        </aside>
        <section className="ml-[6px] flex min-w-0 flex-1 flex-col pt-[2px] pr-[2px] pb-[3px]">
          <div className="flex h-[22px] shrink-0 items-center justify-between bg-[#848284] pr-[9px] pl-1 text-white">
            <h2 className={clsx('text-[13px]', BOLD_FONT)}>Dispatch Board - 14 days Techs</h2>
            <button type="button" aria-label="Close board"><Pixels rows={CLOSE_X} /></button>
          </div>
          <BoardToolbar />
          <BoardGrid />
          <Combo
            label="Call list"
            value="1. Unscheduled Service Calls (Not Planned Maintenance)"
            className="mt-2 mb-1 h-[21px] shrink-0"
          />
          <CallList />
        </section>
      </main>
      <TaskBar />
    </div>
  );
}
